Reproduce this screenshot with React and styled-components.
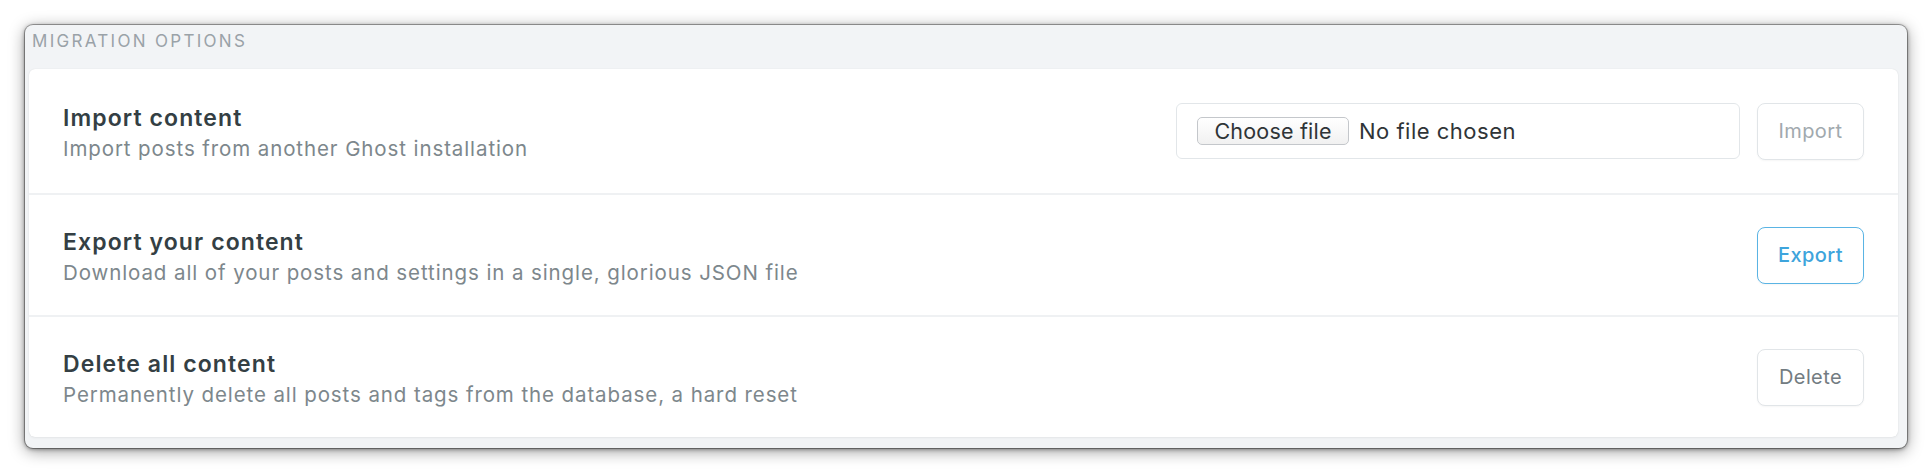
import React from "react";
import styled, { createGlobalStyle } from "styled-components";

const GlobalStyle = createGlobalStyle`
  html, body {
    margin: 0;
    padding: 0;
    background: #ffffff;
  }
  body {
    font-family: "Inter", "Liberation Sans", sans-serif;
  }
`;

const rows = [
  {
    title: "Import content",
    text: "Import posts from another Ghost installation",
    action: "import",
    height: 124,
  },
  {
    title: "Export your content",
    text: "Download all of your posts and settings in a single, glorious JSON file",
    action: "export",
    height: 122,
  },
  {
    title: "Delete all content",
    text: "Permanently delete all posts and tags from the database, a hard reset",
    action: "delete",
    height: 122,
  },
];

const App = () => {
  return (
    <Page>
      <GlobalStyle />
      <Window>
        <SectionHeader>Migration options</SectionHeader>
        <Card>
          {rows.map((row, index) => (
            <Row key={row.action} first={index === 0} $height={row.height}>
              <RowText>
                <RowTitle>{row.title}</RowTitle>
                <RowDesc>{row.text}</RowDesc>
              </RowText>
              <RowActions>
                {row.action === "import" && (
                  <>
                    <FileField>
                      <ChooseButton>Choose file</ChooseButton>
                      <FileStatus>No file chosen</FileStatus>
                    </FileField>
                    <Button muted>Import</Button>
                  </>
                )}
                {row.action === "export" && <Button blue>Export</Button>}
                {row.action === "delete" && <Button>Delete</Button>}
              </RowActions>
            </Row>
          ))}
        </Card>
      </Window>
    </Page>
  );
};

export default App;

const Page = styled.div`
  width: 1932px;
  height: 474px;
  padding: 25px 0 0 25px;
  box-sizing: border-box;
  background: #ffffff;
`;

const Window = styled.div`
  width: 1882px;
  height: 423px;
  box-sizing: border-box;
  background: #f2f4f6;
  border-radius: 8px;
  box-shadow: 0 0 0 1px rgba(0, 0, 0, 0.3), 0 1px 4px rgba(0, 0, 0, 0.45),
    0 3px 16px rgba(0, 0, 0, 0.4);
  display: flex;
  flex-direction: column;
  overflow: hidden;
`;

const SectionHeader = styled.h3`
  margin: 0;
  height: 44px;
  padding: 4px 0 0 7px;
  box-sizing: border-box;
  font-size: 17px;
  font-weight: 400;
  letter-spacing: 2.3px;
  text-transform: uppercase;
  color: #9aa2a8;
  line-height: 24px;
`;

const Card = styled.div`
  margin: 0 9px 11px 4px;
  flex: 1;
  background: #ffffff;
  border-radius: 6px;
  box-shadow: 0 0 1px rgba(0, 0, 0, 0.12), 0 1px 3px rgba(0, 0, 0, 0.05);
  display: flex;
  flex-direction: column;
`;

const Row = styled.div`
  height: ${({ $height }) => $height}px;
  box-sizing: border-box;
  display: flex;
  align-items: center;
  justify-content: space-between;
  padding: 0 34px 0 34px;
  border-top: ${({ first }) => (first ? "none" : "2px solid #eff1f3")};
`;

const RowText = styled.div`
  display: flex;
  flex-direction: column;
  padding-top: 5px;
`;

const RowTitle = styled.h4`
  margin: 0;
  font-size: 23px;
  font-weight: 600;
  line-height: 31px;
  letter-spacing: 1.1px;
  color: #343f44;
`;

const RowDesc = styled.p`
  margin: 0;
  font-size: 20.5px;
  font-weight: 400;
  line-height: 30px;
  letter-spacing: 0.9px;
  color: #7d878c;
`;

const RowActions = styled.div`
  display: flex;
  align-items: center;
  gap: 17px;
`;

const FileField = styled.div`
  width: 564px;
  height: 56px;
  box-sizing: border-box;
  border: 1.5px solid #e2e6e9;
  border-radius: 6px;
  display: flex;
  align-items: center;
  padding-left: 20px;
  gap: 10px;
`;

const ChooseButton = styled.span`
  height: 28px;
  width: 152px;
  box-sizing: border-box;
  border: 1px solid #c4c7cb;
  border-radius: 5px;
  background: linear-gradient(#ffffff, #f1f1f1);
  display: flex;
  align-items: center;
  justify-content: center;
  font-size: 21.5px;
  letter-spacing: 0.2px;
  color: #2f3437;
`;

const FileStatus = styled.span`
  font-size: 22px;
  letter-spacing: 0.5px;
  color: #2f3437;
`;

const Button = styled.button`
  width: 107px;
  height: 57px;
  box-sizing: border-box;
  background: #ffffff;
  border-radius: 8px;
  border: 1.5px solid ${({ blue }) => (blue ? "#5ab4e4" : "#e1e5e8")};
  color: ${({ blue, muted }) =>
    blue ? "#3ea4dc" : muted ? "#a1a9ae" : "#737c82"};
  font-family: "Inter", "Liberation Sans", sans-serif;
  font-size: 20px;
  letter-spacing: 0.4px;
  font-weight: ${({ blue }) => (blue ? 500 : 400)};
  box-shadow: 0 1px 2px rgba(0, 0, 0, 0.04);
  cursor: pointer;
`;
